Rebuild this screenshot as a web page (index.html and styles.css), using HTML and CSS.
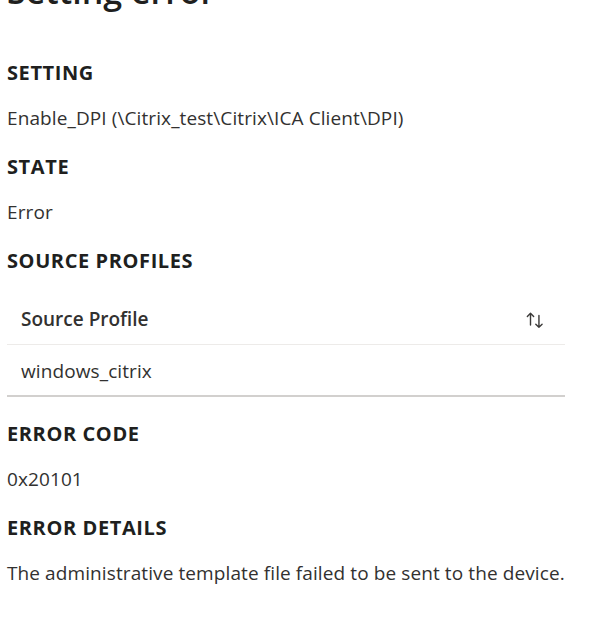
FILE: index.html
```html
<!DOCTYPE html>
<html>
<head>
<meta charset="utf-8">
<link rel="stylesheet" href="styles.css">
</head>
<body>
<div class="panel">
  <h1 class="title">Setting error</h1>
  <div class="section">
    <h2 class="label">SETTING</h2>
    <p class="value">Enable_DPI (\Citrix_test\Citrix\ICA Client\DPI)</p>
  </div>
  <div class="section">
    <h2 class="label">STATE</h2>
    <p class="value">Error</p>
  </div>
  <div class="section">
    <h2 class="label">SOURCE PROFILES</h2>
    <div class="table">
      <div class="thead">
        <span class="th-text">Source Profile</span>
        <svg class="sort" width="18" height="18" viewBox="0 0 16 16" fill="none" stroke="#3b3a39" stroke-width="1.25" stroke-linecap="round" stroke-linejoin="round">
          <path d="M4 12.5V2M1.2 4.8L4 2L6.8 4.8"/>
          <path d="M11.5 4V14.5M8.7 11.7L11.5 14.5L14.3 11.7"/>
        </svg>
      </div>
      <div class="trow">windows_citrix</div>
    </div>
  </div>
  <div class="section">
    <h2 class="label">ERROR CODE</h2>
    <p class="value">0x20101</p>
  </div>
  <div class="section">
    <h2 class="label">ERROR DETAILS</h2>
    <p class="value">The administrative template file failed to be sent to the device.</p>
  </div>
</div>
</body>
</html>
```
FILE: styles.css
```css
html, body {
  margin: 0;
  padding: 0;
  background: #ffffff;
}
body {
  font-family: "Open Sans", "Noto Sans", "Liberation Sans", sans-serif;
  color: #323130;
}
.panel {
  padding: 0 30px 0 7px;
  margin-top: -29px;
}
.title {
  margin: 0 0 50px 0;
  font-size: 34px;
  line-height: 40px;
  font-weight: 600;
  color: #201f1e;
}
.section {
  display: flex;
  flex-direction: column;
}
.label {
  margin: 0 0 21px 0;
  font-size: 20px;
  line-height: 24px;
  font-weight: 700;
  color: #201f1e;
  letter-spacing: 0.6px;
}
.value {
  margin: 0 0 25px 0;
  font-size: 19px;
  line-height: 24px;
  letter-spacing: 0.1px;
  color: #323130;
  white-space: nowrap;
}
.table {
  width: 558px;
  margin-bottom: 25px;
}
.thead {
  display: flex;
  align-items: center;
  justify-content: space-between;
  height: 50px;
  padding: 0 21px 0 14px;
  border-bottom: 1px solid #edebe9;
}
.th-text {
  font-size: 19px;
  font-weight: 600;
  color: #323130;
}
.sort {
  display: block;
  margin-top: 2px;
}
.trow {
  height: 52px;
  display: flex;
  align-items: center;
  padding: 2px 14px 0 14px;
  box-sizing: border-box;
  font-size: 19px;
  letter-spacing: 0.1px;
  border-bottom: 2px solid #d2d0ce;
}
```
